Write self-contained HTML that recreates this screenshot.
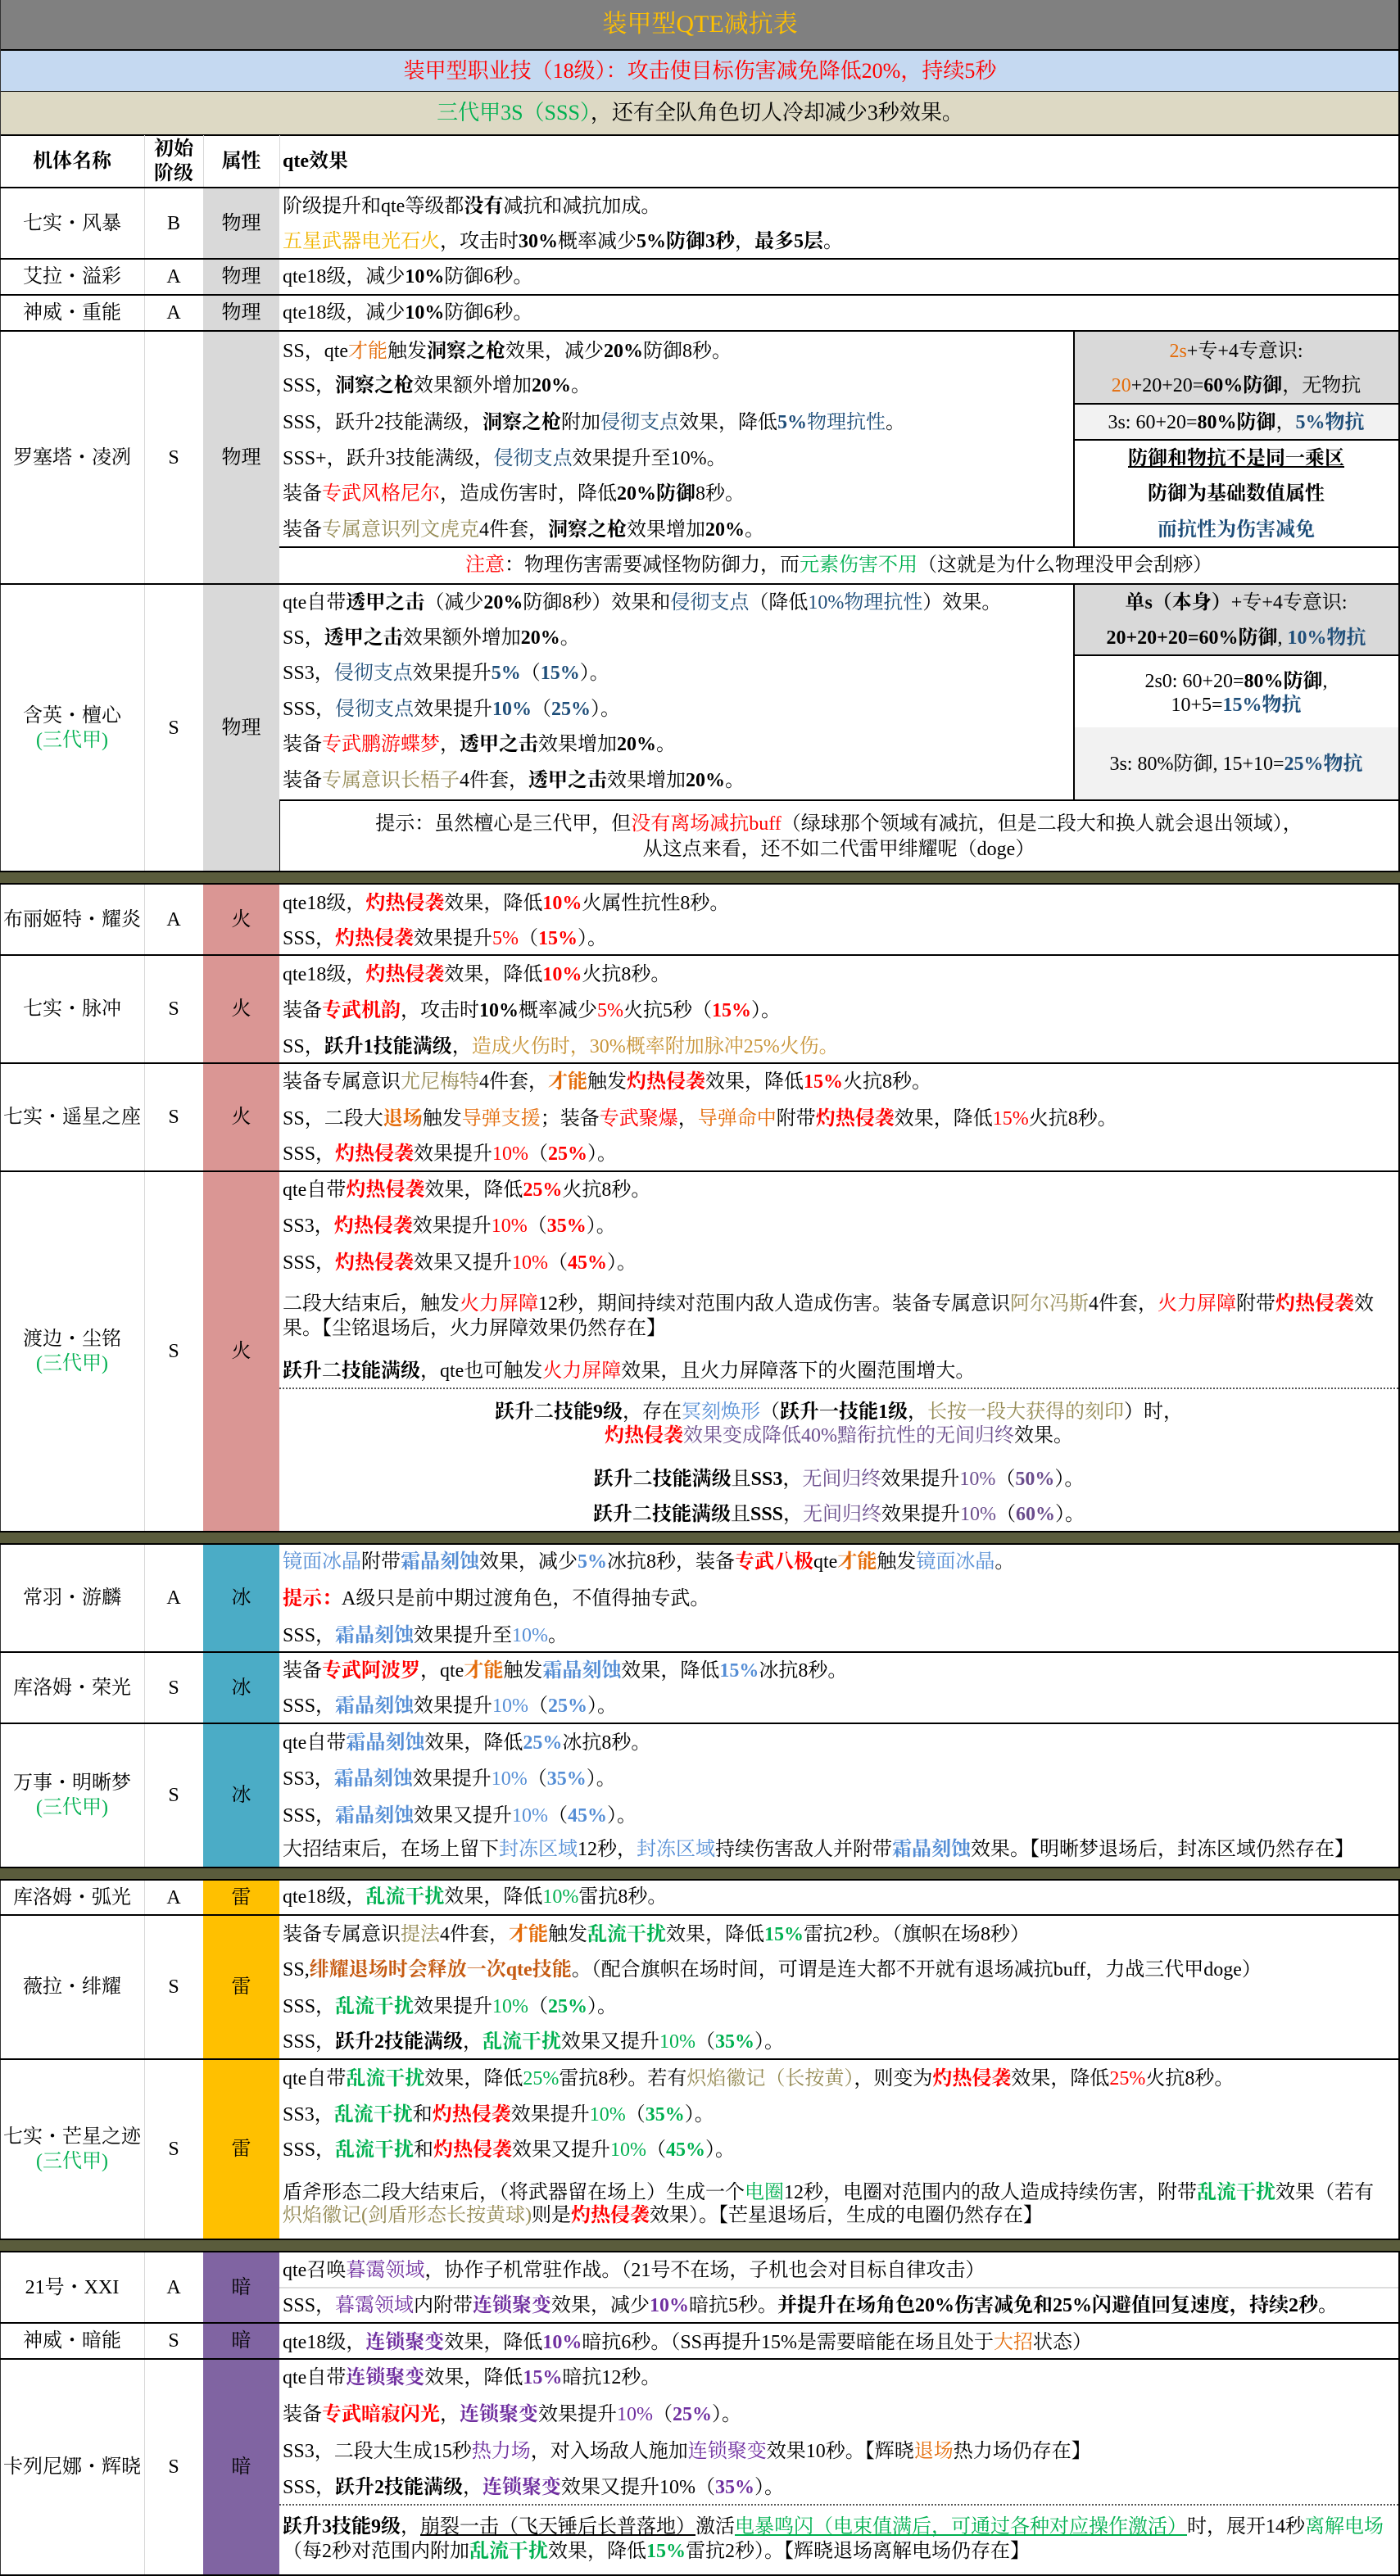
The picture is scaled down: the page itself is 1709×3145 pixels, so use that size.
<!DOCTYPE html>
<html><head><meta charset="utf-8">
<style>
*{margin:0;padding:0;box-sizing:border-box}
body{width:1709px;height:3145px;position:relative;background:#fff;font-family:"Liberation Serif","Noto Serif CJK SC","Noto Sans CJK SC",serif;font-size:24px;color:#000;overflow:hidden}
.a{position:absolute}
.cell{position:absolute;display:flex;flex-direction:column;align-items:center;justify-content:center;text-align:center;line-height:30px}
.t{position:absolute;left:345px;height:30px;line-height:30px;white-space:nowrap}
.c{position:absolute;left:341px;width:1366px;text-align:center;height:30px;line-height:30px;white-space:nowrap}
.rp{position:absolute;left:1311px;width:396px;text-align:center;height:30px;line-height:30px;white-space:nowrap}
.h{position:absolute;left:0;width:1709px;height:2px;background:#000}
.sep{position:absolute;left:0;width:1709px;background:#5a5c3c;border-top:2px solid #000;border-bottom:2px solid #000}
b{font-weight:bold}
.R{color:#ff0000}.O{color:#e46c0a}.Yo{color:#f0b400}.B{color:#1f4e79}.Y{color:#948a54}.G{color:#00b050}.I{color:#558ed5}.P{color:#7030a0}.BR{color:#c55a11}.T{color:#c8953a}.Pu{color:#6a4c8c}.Gt{color:#00b050}
</style></head><body>
<div class="cell" style="left:0;top:0;width:1709px;height:60px;background:#808080;color:#ffc000;font-size:30px">装甲型QTE减抗表</div>
<div class="h" style="top:60px"></div>
<div class="cell" style="left:0;top:62px;width:1709px;height:50px;background:#c5d9f1;color:#ff0000;font-size:26px">装甲型职业技（18级）：攻击使目标伤害减免降低20%，持续5秒</div>
<div class="h" style="top:111px;height:1px"></div>
<div class="cell" style="left:0;top:112px;width:1709px;height:52px;background:#ddd9c4;font-size:26px"><span><span class="G">三代甲3S（SSS）</span>，还有全队角色切人冷却减少3秒效果。</span></div>
<div class="h" style="top:164px"></div>

<div class="a" style="left:248px;top:229px;width:93px;height:835px;background:#d9d9d9"></div>
<div class="a" style="left:248px;top:1079px;width:93px;height:791px;background:#da9694"></div>
<div class="a" style="left:248px;top:1885px;width:93px;height:395px;background:#4bacc6"></div>
<div class="a" style="left:248px;top:2295px;width:93px;height:439px;background:#ffc000"></div>
<div class="a" style="left:248px;top:2749px;width:93px;height:395px;background:#8064a2"></div>
<div class="a" style="left:1311px;top:404px;width:398px;height:88px;background:#d9d9d9"></div>
<div class="a" style="left:1311px;top:492px;width:398px;height:44px;background:#f2f2f2;border-top:2px solid #000"></div>
<div class="a" style="left:1311px;top:536px;width:398px;height:2px;background:#000"></div>
<div class="a" style="left:1310px;top:404px;width:2px;height:264px;background:#000"></div>
<div class="a" style="left:341px;top:667px;width:1368px;height:2px;background:#000"></div>
<div class="a" style="left:1311px;top:713px;width:398px;height:87px;background:#d9d9d9"></div>
<div class="a" style="left:1311px;top:799px;width:398px;height:2px;background:#000"></div>
<div class="a" style="left:1311px;top:888px;width:398px;height:89px;background:#f2f2f2"></div>
<div class="a" style="left:1310px;top:713px;width:2px;height:264px;background:#000"></div>
<div class="a" style="left:341px;top:976px;width:1368px;height:2px;background:#000"></div>
<div class="a" style="left:341px;top:977px;width:1px;height:87px;background:#000"></div>
<div class="a" style="left:341px;top:1694px;width:1366px;border-top:2px dotted #555"></div>
<div class="a" style="left:341px;top:2792px;width:1366px;height:2px;background:#ddd"></div>
<div class="a" style="left:341px;top:3057px;width:1366px;border-top:2px dotted #555"></div>

<div class="a" style="left:176px;top:165px;width:1px;height:2980px;background:#d8d8d8"></div>
<div class="a" style="left:248px;top:165px;width:1px;height:64px;background:#d8d8d8"></div>
<div class="a" style="left:341px;top:165px;width:1px;height:64px;background:#d8d8d8"></div>
<div class="a" style="left:0;top:0;width:1px;height:3145px;background:#333"></div>
<div class="a" style="left:1707px;top:0;width:2px;height:3145px;background:#000"></div>

<div class="cell" style="left:0;top:165px;width:176px;height:64px"><b>机体名称</b></div>
<div class="cell" style="left:176px;top:165px;width:72px;height:64px"><b>初始<br>阶级</b></div>
<div class="cell" style="left:248px;top:165px;width:93px;height:64px"><b>属性</b></div>
<div class="t" style="top:182px"><b>qte效果</b></div>

<div class="h" style="top:228px"></div>
<div class="h" style="top:315px"></div>
<div class="h" style="top:359px"></div>
<div class="h" style="top:403px"></div>
<div class="h" style="top:712px"></div>
<div class="sep" style="top:1063px;height:17px"></div>
<div class="h" style="top:1165px"></div>
<div class="h" style="top:1297px"></div>
<div class="h" style="top:1429px"></div>
<div class="sep" style="top:1869px;height:17px"></div>
<div class="h" style="top:2016px"></div>
<div class="h" style="top:2103px"></div>
<div class="sep" style="top:2279px;height:17px"></div>
<div class="h" style="top:2337px"></div>
<div class="h" style="top:2513px"></div>
<div class="sep" style="top:2733px;height:17px"></div>
<div class="h" style="top:2835px"></div>
<div class="h" style="top:2879px"></div>
<div class="h" style="top:3143px"></div>

<div class="cell" style="left:0;top:229px;width:176px;height:87px">七实・风暴</div>
<div class="cell" style="left:176px;top:229px;width:72px;height:87px">B</div>
<div class="cell" style="left:248px;top:229px;width:93px;height:87px">物理</div>
<div class="cell" style="left:0;top:316px;width:176px;height:44px">艾拉・溢彩</div>
<div class="cell" style="left:176px;top:316px;width:72px;height:44px">A</div>
<div class="cell" style="left:248px;top:316px;width:93px;height:44px">物理</div>
<div class="cell" style="left:0;top:360px;width:176px;height:44px">神威・重能</div>
<div class="cell" style="left:176px;top:360px;width:72px;height:44px">A</div>
<div class="cell" style="left:248px;top:360px;width:93px;height:44px">物理</div>
<div class="cell" style="left:0;top:404px;width:176px;height:309px">罗塞塔・凌冽</div>
<div class="cell" style="left:176px;top:404px;width:72px;height:309px">S</div>
<div class="cell" style="left:248px;top:404px;width:93px;height:309px">物理</div>
<div class="cell" style="left:0;top:713px;width:176px;height:351px"><span>含英・檀心</span><span class="G">(三代甲)</span></div>
<div class="cell" style="left:176px;top:713px;width:72px;height:351px">S</div>
<div class="cell" style="left:248px;top:713px;width:93px;height:351px">物理</div>

<div class="cell" style="left:0;top:1079px;width:176px;height:87px">布丽姬特・耀炎</div>
<div class="cell" style="left:176px;top:1079px;width:72px;height:87px">A</div>
<div class="cell" style="left:248px;top:1079px;width:93px;height:87px">火</div>
<div class="cell" style="left:0;top:1166px;width:176px;height:132px">七实・脉冲</div>
<div class="cell" style="left:176px;top:1166px;width:72px;height:132px">S</div>
<div class="cell" style="left:248px;top:1166px;width:93px;height:132px">火</div>
<div class="cell" style="left:0;top:1298px;width:176px;height:132px">七实・遥星之座</div>
<div class="cell" style="left:176px;top:1298px;width:72px;height:132px">S</div>
<div class="cell" style="left:248px;top:1298px;width:93px;height:132px">火</div>
<div class="cell" style="left:0;top:1430px;width:176px;height:440px"><span>渡边・尘铭</span><span class="G">(三代甲)</span></div>
<div class="cell" style="left:176px;top:1430px;width:72px;height:440px">S</div>
<div class="cell" style="left:248px;top:1430px;width:93px;height:440px">火</div>

<div class="cell" style="left:0;top:1885px;width:176px;height:132px">常羽・游麟</div>
<div class="cell" style="left:176px;top:1885px;width:72px;height:132px">A</div>
<div class="cell" style="left:248px;top:1885px;width:93px;height:132px">冰</div>
<div class="cell" style="left:0;top:2017px;width:176px;height:87px">库洛姆・荣光</div>
<div class="cell" style="left:176px;top:2017px;width:72px;height:87px">S</div>
<div class="cell" style="left:248px;top:2017px;width:93px;height:87px">冰</div>
<div class="cell" style="left:0;top:2104px;width:176px;height:176px"><span>万事・明晰梦</span><span class="G">(三代甲)</span></div>
<div class="cell" style="left:176px;top:2104px;width:72px;height:176px">S</div>
<div class="cell" style="left:248px;top:2104px;width:93px;height:176px">冰</div>

<div class="cell" style="left:0;top:2295px;width:176px;height:43px">库洛姆・弧光</div>
<div class="cell" style="left:176px;top:2295px;width:72px;height:43px">A</div>
<div class="cell" style="left:248px;top:2295px;width:93px;height:43px">雷</div>
<div class="cell" style="left:0;top:2338px;width:176px;height:176px">薇拉・绯耀</div>
<div class="cell" style="left:176px;top:2338px;width:72px;height:176px">S</div>
<div class="cell" style="left:248px;top:2338px;width:93px;height:176px">雷</div>
<div class="cell" style="left:0;top:2514px;width:176px;height:220px"><span>七实・芒星之迹</span><span class="G">(三代甲)</span></div>
<div class="cell" style="left:176px;top:2514px;width:72px;height:220px">S</div>
<div class="cell" style="left:248px;top:2514px;width:93px;height:220px">雷</div>

<div class="cell" style="left:0;top:2749px;width:176px;height:87px">21号・XXI</div>
<div class="cell" style="left:176px;top:2749px;width:72px;height:87px">A</div>
<div class="cell" style="left:248px;top:2749px;width:93px;height:87px">暗</div>
<div class="cell" style="left:0;top:2836px;width:176px;height:44px">神威・暗能</div>
<div class="cell" style="left:176px;top:2836px;width:72px;height:44px">S</div>
<div class="cell" style="left:248px;top:2836px;width:93px;height:44px">暗</div>
<div class="cell" style="left:0;top:2880px;width:176px;height:264px">卡列尼娜・辉晓</div>
<div class="cell" style="left:176px;top:2880px;width:72px;height:264px">S</div>
<div class="cell" style="left:248px;top:2880px;width:93px;height:264px">暗</div>

<div class="t" style="top:237px">阶级提升和qte等级都<b>没有</b>减抗和减抗加成。</div>
<div class="t" style="top:280px"><span class="Yo">五星武器电光石火</span>，攻击时<b>30%</b>概率减少<b>5%防御3秒</b>，<b>最多5层</b>。</div>
<div class="t" style="top:323px">qte18级，减少<b>10%</b>防御6秒。</div>
<div class="t" style="top:367px">qte18级，减少<b>10%</b>防御6秒。</div>

<div class="t" style="top:414px">SS，qte<span class="O">才能</span>触发<b>洞察之枪</b>效果，减少<b>20%</b>防御8秒。</div>
<div class="t" style="top:456px">SSS，<b>洞察之枪</b>效果额外增加<b>20%</b>。</div>
<div class="t" style="top:501px">SSS，跃升2技能满级，<b>洞察之枪</b>附加<span class="B">侵彻支点</span>效果，降低<b class="B">5%</b><span class="B">物理抗性</span>。</div>
<div class="t" style="top:545px">SSS+，跃升3技能满级，<span class="B">侵彻支点</span>效果提升至10%。</div>
<div class="t" style="top:588px">装备<span class="R">专武风格尼尔</span>，造成伤害时，降低<b>20%防御</b>8秒。</div>
<div class="t" style="top:632px">装备<span class="Y">专属意识列文虎克</span>4件套，<b>洞察之枪</b>效果增加<b>20%</b>。</div>
<div class="rp" style="top:414px"><span class="O">2s</span>+专+4专意识:</div>
<div class="rp" style="top:456px"><span class="O">20</span>+20+20=<b>60%防御</b>，无物抗</div>
<div class="rp" style="top:501px">3s: 60+20=<b>80%防御</b>，<b class="B">5%物抗</b></div>
<div class="rp" style="top:545px"><b><u>防御和物抗不是同一乘区</u></b></div>
<div class="rp" style="top:588px"><b>防御为基础数值属性</b></div>
<div class="rp" style="top:632px"><b class="B">而抗性为伤害减免</b></div>
<div class="c" style="top:675px"><span class="R">注意</span>：物理伤害需要减怪物防御力，而<span class="G">元素伤害不用</span>（这就是为什么物理没甲会刮痧）</div>

<div class="t" style="top:721px">qte自带<b>透甲之击</b>（减少<b>20%</b>防御8秒）效果和<span class="B">侵彻支点</span>（降低<span class="B">10%物理抗性</span>）效果。</div>
<div class="t" style="top:764px">SS，<b>透甲之击</b>效果额外增加<b>20%</b>。</div>
<div class="t" style="top:807px">SS3，<span class="B">侵彻支点</span>效果提升<b class="B">5%</b>（<b class="B">15%</b>）。</div>
<div class="t" style="top:851px">SSS，<span class="B">侵彻支点</span>效果提升<b class="B">10%</b>（<b class="B">25%</b>）。</div>
<div class="t" style="top:894px">装备<span class="R">专武鹏游蝶梦</span>，<b>透甲之击</b>效果增加<b>20%</b>。</div>
<div class="t" style="top:938px">装备<span class="Y">专属意识长梧子</span>4件套，<b>透甲之击</b>效果增加<b>20%</b>。</div>
<div class="rp" style="top:721px"><b>单s（本身）</b>+专+4专意识:</div>
<div class="rp" style="top:764px"><b>20+20+20=60%防御</b>, <b class="B">10%物抗</b></div>
<div class="rp" style="top:817px">2s0: 60+20=<b>80%防御</b>,</div>
<div class="rp" style="top:846px">10+5=<b class="B">15%物抗</b></div>
<div class="rp" style="top:918px">3s: 80%防御, 15+10=<b class="B">25%物抗</b></div>
<div class="c" style="top:991px">提示：虽然檀心是三代甲，但<span class="R">没有离场减抗buff</span>（绿球那个领域有减抗，但是二段大和换人就会退出领域），</div>
<div class="c" style="top:1022px">从这点来看，还不如二代雷甲绯耀呢（doge）</div>

<div class="t" style="top:1088px">qte18级，<b class="R">灼热侵袭</b>效果，降低<b class="R">10%</b>火属性抗性8秒。</div>
<div class="t" style="top:1131px">SSS，<b class="R">灼热侵袭</b>效果提升<span class="R">5%</span>（<b class="R">15%</b>）。</div>
<div class="t" style="top:1175px">qte18级，<b class="R">灼热侵袭</b>效果，降低<b class="R">10%</b>火抗8秒。</div>
<div class="t" style="top:1219px">装备<b class="R">专武机韵</b>，攻击时<b>10%</b>概率减少<span class="R">5%</span>火抗5秒（<b class="R">15%</b>）。</div>
<div class="t" style="top:1263px">SS，<b>跃升1技能满级</b>，<span class="T">造成火伤时，30%概率附加脉冲25%火伤。</span></div>
<div class="t" style="top:1306px">装备专属意识<span class="Y">尤尼梅特</span>4件套，<b class="O">才能</b>触发<b class="R">灼热侵袭</b>效果，降低<b class="R">15%</b>火抗8秒。</div>
<div class="t" style="top:1351px">SS，二段大<b class="O">退场</b>触发<span class="O">导弹支援</span>；装备<span class="R">专武聚爆</span>，<span class="O">导弹命中</span>附带<b class="R">灼热侵袭</b>效果，降低<span class="R">15%</span>火抗8秒。</div>
<div class="t" style="top:1394px">SSS，<b class="R">灼热侵袭</b>效果提升<span class="R">10%</span>（<b class="R">25%</b>）。</div>
<div class="t" style="top:1438px">qte自带<b class="R">灼热侵袭</b>效果，降低<b class="R">25%</b>火抗8秒。</div>
<div class="t" style="top:1482px">SS3，<b class="R">灼热侵袭</b>效果提升<span class="R">10%</span>（<b class="R">35%</b>）。</div>
<div class="t" style="top:1527px">SSS，<b class="R">灼热侵袭</b>效果又提升<span class="R">10%</span>（<b class="R">45%</b>）。</div>
<div class="t" style="top:1577px">二段大结束后，触发<span class="R">火力屏障</span>12秒，期间持续对范围内敌人造成伤害。装备专属意识<span class="Y">阿尔冯斯</span>4件套，<span class="R">火力屏障</span>附带<b class="R">灼热侵袭</b>效</div>
<div class="t" style="top:1607px">果。【尘铭退场后，火力屏障效果仍然存在】</div>
<div class="t" style="top:1659px"><b>跃升二技能满级</b>，qte也可触发<span class="R">火力屏障</span>效果，且火力屏障落下的火圈范围增大。</div>
<div class="c" style="top:1709px"><b>跃升二技能9级</b>，存在<span class="I">冥刻焕形</span>（<b>跃升一技能1级</b>，<span class="Y">长按一段大获得的刻印</span>）时，</div>
<div class="c" style="top:1738px"><b class="R">灼热侵袭</b><span class="Pu">效果变成降低40%黯衔抗性的无间归终</span>效果。</div>
<div class="c" style="top:1791px"><b>跃升二技能满级</b>且<b>SS3</b>，<span class="Pu">无间归终</span>效果提升<span class="Pu">10%</span>（<b class="Pu">50%</b>）。</div>
<div class="c" style="top:1834px"><b>跃升二技能满级</b>且<b>SSS</b>，<span class="Pu">无间归终</span>效果提升<span class="Pu">10%</span>（<b class="Pu">60%</b>）。</div>

<div class="t" style="top:1892px"><span class="I">镜面冰晶</span>附带<b class="I">霜晶刻蚀</b>效果，减少<b class="I">5%</b>冰抗8秒，装备<b class="R">专武八极</b>qte<b class="O">才能</b>触发<span class="I">镜面冰晶</span>。</div>
<div class="t" style="top:1937px"><b class="R">提示：</b>A级只是前中期过渡角色，不值得抽专武。</div>
<div class="t" style="top:1982px">SSS，<b class="I">霜晶刻蚀</b>效果提升至<span class="I">10%</span>。</div>
<div class="t" style="top:2025px">装备<b class="R">专武阿波罗</b>，qte<b class="O">才能</b>触发<b class="I">霜晶刻蚀</b>效果，降低<b class="I">15%</b>冰抗8秒。</div>
<div class="t" style="top:2068px">SSS，<b class="I">霜晶刻蚀</b>效果提升<span class="I">10%</span>（<b class="I">25%</b>）。</div>
<div class="t" style="top:2113px">qte自带<b class="I">霜晶刻蚀</b>效果，降低<b class="I">25%</b>冰抗8秒。</div>
<div class="t" style="top:2157px">SS3，<b class="I">霜晶刻蚀</b>效果提升<span class="I">10%</span>（<b class="I">35%</b>）。</div>
<div class="t" style="top:2202px">SSS，<b class="I">霜晶刻蚀</b>效果又提升<span class="I">10%</span>（<b class="I">45%</b>）。</div>
<div class="t" style="top:2243px">大招结束后，在场上留下<span class="I">封冻区域</span>12秒，<span class="I">封冻区域</span>持续伤害敌人并附带<b class="I">霜晶刻蚀</b>效果。【明晰梦退场后，封冻区域仍然存在】</div>

<div class="t" style="top:2301px">qte18级，<b class="G">乱流干扰</b>效果，降低<span class="G">10%</span>雷抗8秒。</div>
<div class="t" style="top:2347px">装备专属意识<span class="Y">提法</span>4件套，<b class="O">才能</b>触发<b class="G">乱流干扰</b>效果，降低<b class="G">15%</b>雷抗2秒。（旗帜在场8秒）</div>
<div class="t" style="top:2390px">SS,<b class="BR">绯耀退场时会释放一次qte技能</b>。（配合旗帜在场时间，可谓是连大都不开就有退场减抗buff，力战三代甲doge）</div>
<div class="t" style="top:2435px">SSS，<b class="G">乱流干扰</b>效果提升<span class="G">10%</span>（<b class="G">25%</b>）。</div>
<div class="t" style="top:2478px">SSS，<b>跃升2技能满级</b>，<b class="G">乱流干扰</b>效果又提升<span class="G">10%</span>（<b class="G">35%</b>）。</div>
<div class="t" style="top:2523px">qte自带<b class="G">乱流干扰</b>效果，降低<span class="G">25%</span>雷抗8秒。若有<span class="Y">炽焰徽记（长按黄）</span>，则变为<b class="R">灼热侵袭</b>效果，降低<span class="R">25%</span>火抗8秒。</div>
<div class="t" style="top:2567px">SS3，<b class="G">乱流干扰</b>和<b class="R">灼热侵袭</b>效果提升<span class="G">10%</span>（<b class="G">35%</b>）。</div>
<div class="t" style="top:2610px">SSS，<b class="G">乱流干扰</b>和<b class="R">灼热侵袭</b>效果又提升<span class="G">10%</span>（<b class="G">45%</b>）。</div>
<div class="t" style="top:2662px">盾斧形态二段大结束后，（将武器留在场上）生成一个<span class="G">电圈</span>12秒，电圈对范围内的敌人造成持续伤害，附带<b class="G">乱流干扰</b>效果（若有</div>
<div class="t" style="top:2690px"><span class="Y">炽焰徽记(剑盾形态长按黄球)</span>则是<b class="R">灼热侵袭</b>效果）。【芒星退场后，生成的电圈仍然存在】</div>

<div class="t" style="top:2757px">qte召唤<span class="P">暮霭领域</span>，协作子机常驻作战。（21号不在场，子机也会对目标自律攻击）</div>
<div class="t" style="top:2800px">SSS，<span class="P">暮霭领域</span>内附带<b class="P">连锁聚变</b>效果，减少<b class="P">10%</b>暗抗5秒。<b>并提升在场角色20%伤害减免和25%闪避值回复速度，持续2秒。</b></div>
<div class="t" style="top:2845px">qte18级，<b class="P">连锁聚变</b>效果，降低<b class="P">10%</b>暗抗6秒。（SS再提升15%是需要暗能在场且处于<span class="O">大招</span>状态）</div>
<div class="t" style="top:2888px">qte自带<b class="P">连锁聚变</b>效果，降低<b class="P">15%</b>暗抗12秒。</div>
<div class="t" style="top:2933px">装备<b class="R">专武暗寂闪光</b>，<b class="P">连锁聚变</b>效果提升<span class="P">10%</span>（<b class="P">25%</b>）。</div>
<div class="t" style="top:2978px">SS3，二段大生成15秒<span class="P">热力场</span>，对入场敌人施加<span class="P">连锁聚变</span>效果10秒。【辉晓<span class="O">退场</span>热力场仍存在】</div>
<div class="t" style="top:3022px">SSS，<b>跃升2技能满级</b>，<b class="P">连锁聚变</b>效果又提升10%（<b class="P">35%</b>）。</div>
<div class="t" style="top:3070px"><b>跃升3技能9级</b>，<u>崩裂一击（飞天锤后长普落地）</u>激活<u class="G">电暴鸣闪（电束值满后，可通过各种对应操作激活）</u>时，展开14秒<span class="G">离解电场</span></div>
<div class="t" style="top:3100px">（每2秒对范围内附加<b class="G">乱流干扰</b>效果，降低<b class="G">15%</b>雷抗2秒）。【辉晓退场离解电场仍存在】</div>
</body></html>
